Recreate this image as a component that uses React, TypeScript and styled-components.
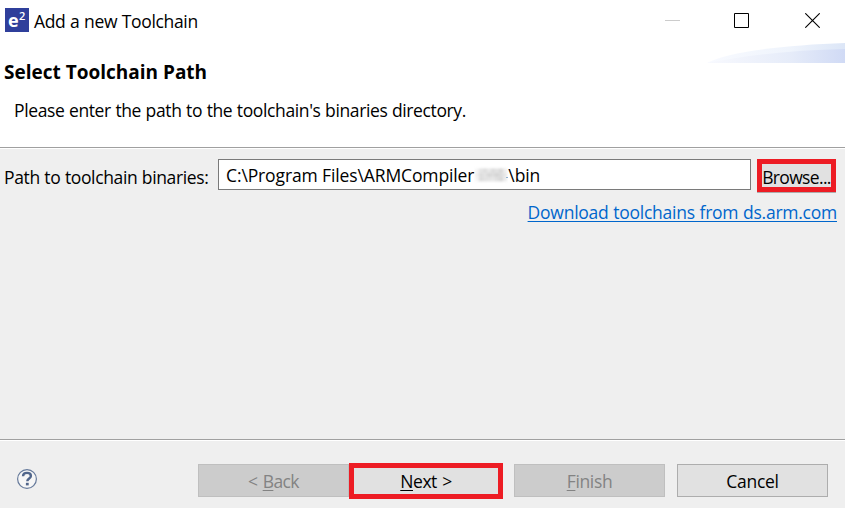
import React from "react";
import styled, { createGlobalStyle, css } from "styled-components";

const GlobalStyle = createGlobalStyle`
  * { box-sizing: border-box; }
  body {
    margin: 0;
    overflow: hidden;
    font: 17.5px/24px "Open Sans", "Noto Sans", sans-serif;
    color: #000;
  }
`;

const Dialog = styled.div`
  width: 845px;
  height: 508px;
  display: flex;
  flex-direction: column;
  background: #efefef;
`;

const TitleBar = styled.header`
  height: 43px;
  flex: none;
  display: flex;
  align-items: flex-start;
  padding: 8px 25px 0 5px;
  background: #fff;
`;

const Title = styled.span`
  flex: 1;
  margin: 1px 0 0 5px;
  letter-spacing: -0.34px;
  word-spacing: 0.4px;
  white-space: nowrap;
`;

const AppMark = styled.svg`
  display: block;
  width: 24px;
  height: 24px;
`;

const WindowControls = styled.div`
  display: flex;
  gap: 54px;
  padding-top: 5px;
`;

const ControlIcon = styled.svg`
  display: block;
  width: 15px;
  height: 15px;
  &:last-child { margin-left: 2px; }
`;

const Banner = styled.section`
  height: 106px;
  flex: none;
  display: flex;
  background: #fff;
  border-bottom: 1px solid #fff;
  box-shadow: inset 0 -1px #a0a0a0;
`;

const BannerText = styled.div`
  flex: 1;
  padding: 16px 0 0 4px;
`;

const Heading = styled.h1`
  margin: 0;
  font-size: 19px;
  line-height: 26px;
  font-weight: 700;
`;

const Description = styled.p`
  margin: 13px 0 0 10px;
  letter-spacing: -0.38px;
  word-spacing: 0.4px;
  white-space: nowrap;
`;

const Swoosh = styled.svg`
  display: block;
  width: 138px;
  height: 20px;
`;

const Content = styled.main`
  flex: 1;
  padding: 10px 9px 0 4px;
`;

const PathRow = styled.div`
  height: 34px;
  display: flex;
  align-items: flex-start;
`;

const Label = styled.label`
  width: 214px;
  padding-top: 6px;
  letter-spacing: -0.37px;
  word-spacing: 0.4px;
  white-space: nowrap;
`;

const PathField = styled.div`
  width: 533px;
  height: 31px;
  display: flex;
  padding: 3px 0 0 7px;
  margin-right: 6px;
  border: 1px solid #7a7a7a;
  background: #fff;
  letter-spacing: -0.12px;
  white-space: pre;
`;

const Smudge = styled.svg`
  display: block;
  width: 34px;
  height: 22px;
`;

const SmudgeTiles = styled.g`
  filter: blur(0.9px);
`;

const buttonFace = css`
  display: flex;
  justify-content: center;
  font: inherit;
  color: #000;
  background: #e1e1e1;
  white-space: pre;
`;

const BrowseButton = styled.button`
  ${buttonFace}
  width: 79px;
  height: 33px;
  padding: 1px 0 0;
  border: 5px solid #ed1c24;
  box-shadow: 0 1px #adadad;
  letter-spacing: -0.66px;
`;

const LinkRow = styled.div`
  display: flex;
  justify-content: flex-end;
  padding: 7px 0 0;
  margin-right: -1px;
`;

const DownloadLink = styled.a`
  color: #0066cc;
  letter-spacing: -0.24px;
  word-spacing: 0.35px;
  text-decoration: underline;
  text-decoration-thickness: 1px;
  text-underline-offset: 2px;
  text-decoration-skip-ink: none;
`;

const Footer = styled.footer`
  height: 69px;
  flex: none;
  display: flex;
  align-items: flex-start;
  padding: 23px 17px 0;
  border-top: 1px solid #a0a0a0;
  box-shadow: inset 0 1px #fff;
`;

const HelpIcon = styled.svg`
  display: block;
  width: 20px;
  height: 20px;
  margin: 6px 161px 0 0;
`;

const WizardButton = styled.button<{ $gap?: number; $track: number; $highlighted?: boolean }>`
  ${buttonFace}
  width: 151px;
  height: 33px;
  margin: 1px 0 0 ${({ $gap = 0 }) => $gap}px;
  padding: 4px 0 0;
  border: 1px solid #adadad;
  letter-spacing: ${({ $track }) => $track}px;
  word-spacing: 1.2px;
  &:disabled {
    color: #838383;
    background: #ccc;
    border-color: #bfbfbf;
  }
  ${({ $highlighted }) => $highlighted && css`
    width: 154px;
    height: 36px;
    margin-top: 0;
    padding-top: 1px;
    border: 5px solid #ed1c24;
  `}
`;

const Mnemonic = styled.span`
  text-decoration: underline;
  text-decoration-thickness: 1px;
  text-underline-offset: 2px;
`;

const smudgeTones = [
  ["#f5f5f5", "#e4e4e4", "#dedede", "#e8e8e8", "#dcdcdc", "#e2e2e2", "#d8d8d8", "#eeeeee"],
  ["#efefef", "#dedede", "#e3e3e3", "#d8d8d8", "#dddddd", "#d5d5d5", "#dddddd", "#e8e8e8"],
  ["#f4f4f4", "#dcdcdc", "#e1e1e1", "#e3e3e3", "#e6e6e6", "#dfdfdf", "#d7d7d7", "#ececec"],
];

export default function App() {
  return (
    <>
      <GlobalStyle />
      <Dialog>
        <TitleBar>
          <AppMark viewBox="0 0 24 24">
            <rect width="24" height="24" fill="#2f3f9b" />
            <text x="3" y="18.5" fill="#fff" fontSize="18" fontWeight="700">e</text>
            <text x="14" y="11.5" fill="#fff" fontSize="11" fontWeight="600">2</text>
          </AppMark>
          <Title>Add a new Toolchain</Title>
          <WindowControls>
            <ControlIcon viewBox="0 0 15 15"><path d="M0 7.5h15" stroke="#ccc" /></ControlIcon>
            <ControlIcon viewBox="0 0 15 15"><path d="M.5.5h14v14H.5z" fill="none" stroke="#000" /></ControlIcon>
            <ControlIcon viewBox="0 0 15 15"><path d="M.3.3l14.4 14.4M14.7.3L.3 14.7" stroke="#000" strokeWidth="1.1" /></ControlIcon>
          </WindowControls>
        </TitleBar>
        <Banner>
          <BannerText>
            <Heading>Select Toolchain Path</Heading>
            <Description>Please enter the path to the toolchain's binaries directory.</Description>
          </BannerText>
          <Swoosh viewBox="0 0 138 20">
            <defs>
              <linearGradient id="outer"><stop stopColor="#f8faff" /><stop offset=".6" stopColor="#eff4fc" /><stop offset="1" stopColor="#dce6f7" /></linearGradient>
              <linearGradient id="inner"><stop stopColor="#f8f9fe" /><stop offset=".6" stopColor="#e6ecf9" /><stop offset="1" stopColor="#d0daf5" /></linearGradient>
            </defs>
            <path d="M0 20C20 9 78 2 138 0V20Z" fill="url(#outer)" />
            <path d="M0 20C40 12 88 7 138 6V20Z" fill="url(#inner)" />
          </Swoosh>
        </Banner>
        <Content>
          <PathRow>
            <Label>Path to toolchain binaries:</Label>
            <PathField>
              <span>C:\Program Files\ARMCompiler</span>
              <Smudge viewBox="0 0 34 22">
                <SmudgeTiles>
                  {smudgeTones.map((row, y) =>
                    row.map((fill, x) => (
                      <rect key={`${y}-${x}`} x={1 + x * 4} y={5.5 + y * 4.3} width="4" height="4.3" fill={fill} />
                    ))
                  )}
                </SmudgeTiles>
                <path d="M32 14.5h2" stroke="#8fb0d0" />
              </Smudge>
              <span>\bin</span>
            </PathField>
            <BrowseButton>Browse...</BrowseButton>
          </PathRow>
          <LinkRow>
            <DownloadLink>Download toolchains from ds.arm.com</DownloadLink>
          </LinkRow>
        </Content>
        <Footer>
          <HelpIcon viewBox="0 0 20 20">
            <circle cx="10" cy="10" r="9.4" fill="#f6f6f6" stroke="#667a9b" strokeWidth="1.2" />
            <path d="M6 7.2C6.1 5 7.7 3.9 10 3.9c2.3 0 3.9 1.1 3.9 3 0 2.6-3.6 2.6-3.6 5.4" fill="none" stroke="#51668b" strokeWidth="2.4" />
            <path d="M8.9 13.8h2.8v2.6H8.9z" fill="#51668b" />
          </HelpIcon>
          <WizardButton disabled $track={-0.6}><span>&lt; <Mnemonic>B</Mnemonic>ack</span></WizardButton>
          <WizardButton $track={-0.45} $highlighted><span><Mnemonic>N</Mnemonic>ext &gt;</span></WizardButton>
          <WizardButton disabled $gap={11} $track={-0.35}><span><Mnemonic>F</Mnemonic>inish</span></WizardButton>
          <WizardButton $gap={12} $track={-0.3}><span>Cancel</span></WizardButton>
        </Footer>
      </Dialog>
    </>
  );
}
